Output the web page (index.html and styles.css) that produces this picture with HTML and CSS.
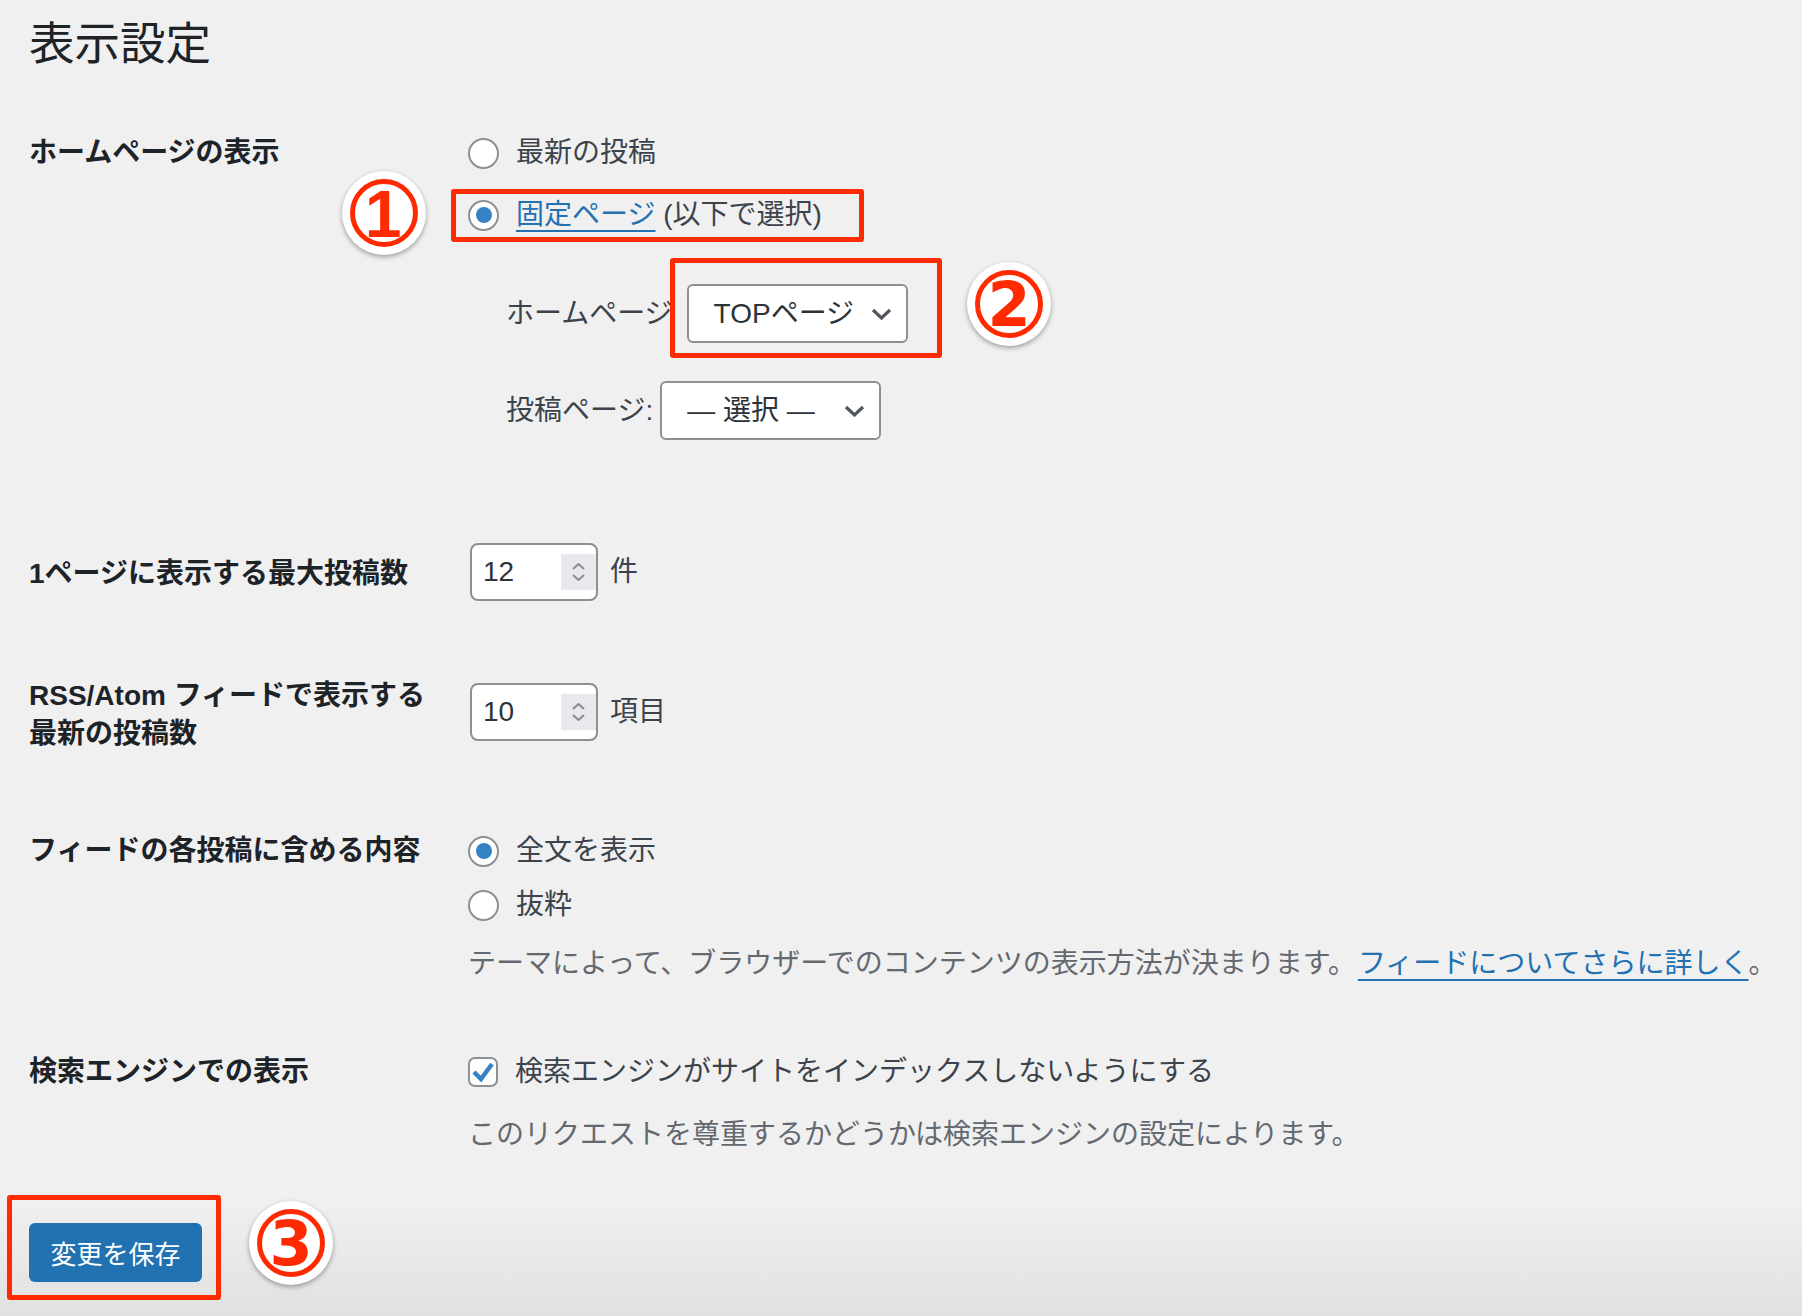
FILE: index.html
```html
<!DOCTYPE html>
<html lang="ja">
<head>
<meta charset="utf-8">
<title>表示設定</title>
<link rel="stylesheet" href="styles.css">
</head>
<body>
<div class="page">
  <h1 class="title">表示設定</h1>
  <form class="form">
    <div class="row row-front">
      <div class="th">ホームページの表示</div>
      <div class="td">
        <div class="choices">
          <label class="choice"><span class="radio"></span>最新の投稿</label>
          <label class="choice"><span class="radio checked"></span><span><a class="link">固定ページ</a> (以下で選択)</span></label>
        </div>
        <div class="subfields">
          <div class="subfield subfield-front">
            <span class="sub-label">ホームページ</span>
            <span class="select"><span>TOPページ</span><svg class="chev" width="21" height="12" viewBox="0 0 21 12"><polyline points="2,2 10.5,10 19,2"/></svg></span>
          </div>
          <div class="subfield">
            <span class="sub-label">投稿ページ:</span>
            <span class="select"><span>— 選択 —</span><svg class="chev" width="21" height="12" viewBox="0 0 21 12"><polyline points="2,2 10.5,10 19,2"/></svg></span>
          </div>
        </div>
      </div>
    </div>

    <div class="row row-posts">
      <div class="th">1ページに表示する最大投稿数</div>
      <div class="td">
        <div class="number-field">
          <span class="number"><span>12</span><span class="spinner"><svg width="13" height="7" viewBox="0 0 13 7"><polyline points="1,6 6.5,1 12,6"/></svg><svg width="13" height="7" viewBox="0 0 13 7"><polyline points="1,1 6.5,6 12,1"/></svg></span></span>
          <span>件</span>
        </div>
      </div>
    </div>

    <div class="row row-feed">
      <div class="th">RSS/Atom フィードで表示する<br>最新の投稿数</div>
      <div class="td">
        <div class="number-field">
          <span class="number"><span>10</span><span class="spinner"><svg width="13" height="7" viewBox="0 0 13 7"><polyline points="1,6 6.5,1 12,6"/></svg><svg width="13" height="7" viewBox="0 0 13 7"><polyline points="1,1 6.5,6 12,1"/></svg></span></span>
          <span>項目</span>
        </div>
      </div>
    </div>

    <div class="row row-content">
      <div class="th">フィードの各投稿に含める内容</div>
      <div class="td">
        <div class="choices choices-tight">
          <label class="choice"><span class="radio checked"></span>全文を表示</label>
          <label class="choice"><span class="radio"></span>抜粋</label>
        </div>
        <p class="description desc-feed">テーマによって、ブラウザーでのコンテンツの表示方法が決まります。<a class="link">フィードについてさらに詳しく</a>。</p>
      </div>
    </div>

    <div class="row row-search">
      <div class="th">検索エンジンでの表示</div>
      <div class="td">
        <label class="choice check-row"><span class="checkbox"><svg width="26" height="26" viewBox="0 0 26 26"><path d="M4 13 L11 20 L22 5"/></svg></span>検索エンジンがサイトをインデックスしないようにする</label>
        <p class="description desc-search">このリクエストを尊重するかどうかは検索エンジンの設定によります。</p>
      </div>
    </div>

    <div class="submit">
      <button type="button" class="button">変更を保存</button>
    </div>
  </form>

  <div class="marker marker-1"></div>
  <div class="marker marker-2"></div>
  <div class="marker marker-3"></div>

  <div class="badge badge-1"><svg width="84" height="84" viewBox="0 0 84 84"><circle cx="42" cy="42" r="31.5"/><text x="41" y="66" class="digit-one">1</text></svg></div>
  <div class="badge badge-2"><svg width="84" height="84" viewBox="0 0 84 84"><circle cx="42" cy="42" r="31.5"/><text x="42" y="64">2</text></svg></div>
  <div class="badge badge-3"><svg width="84" height="84" viewBox="0 0 84 84"><circle cx="42" cy="42" r="31.5"/><text x="42" y="64">3</text></svg></div>
</div>
</body>
</html>
```

FILE: styles.css
```css
* { box-sizing: border-box; }

html {
  background: #f0f0f1 linear-gradient(to bottom, #f0f0f1 0, #f0f0f1 1200px, #e1e1e2 1316px) no-repeat;
  background-size: 100% 1316px;
}

body {
  margin: 0;
  font-family: "Liberation Sans", "Noto Sans CJK JP", sans-serif;
  font-size: 28px;
  line-height: 38px;
  color: #3c434a;
}

.page {
  position: relative;
  width: 1802px;
  height: 1316px;
  padding: 17px 0 0 29px;
}

.title {
  margin: 0;
  font-size: 45.5px;
  line-height: 56px;
  font-weight: 400;
  color: #1d2327;
}

.row {
  display: flex;
  align-items: flex-start;
}

.th {
  width: 400px;
  margin-right: 39px;
  flex-shrink: 0;
  font-weight: 700;
  color: #1d2327;
  white-space: nowrap;
}

.td { flex: 1; }

.row-front { margin-top: 61px; }
.row-posts { margin-top: 103px; }
.row-posts .th { padding-top: 12px; }
.row-feed { margin-top: 76px; }
.row-feed .td { padding-top: 6px; }
.row-content { margin-top: 79px; }
.row-search { margin-top: 70px; }
.submit { margin-top: 69px; }

.choices {
  display: flex;
  flex-direction: column;
  gap: 24px;
}
.choices-tight { gap: 16px; }

.choice {
  display: flex;
  align-items: center;
  height: 38px;
  gap: 17px;
}

.radio {
  width: 31px;
  height: 31px;
  border: 2px solid #8c8f94;
  border-radius: 50%;
  background: #fff;
  display: flex;
  align-items: center;
  justify-content: center;
  flex-shrink: 0;
}
.radio.checked::before {
  content: "";
  width: 16px;
  height: 16px;
  border-radius: 50%;
  background: #3582c4;
}

.link {
  color: #2271b1;
  text-decoration: underline;
  text-decoration-thickness: 2px;
  text-underline-offset: 6px;
}

.desc-feed .link { margin-left: 2px; }

.subfields {
  margin-top: 50px;
  padding-left: 38px;
  display: flex;
  flex-direction: column;
  gap: 38px;
}

.subfield {
  display: flex;
  align-items: center;
  gap: 7px;
  height: 59px;
}
.subfield-front { gap: 14px; }

.select {
  width: 221px;
  height: 59px;
  border: 2px solid #8c8f94;
  border-radius: 6px;
  background: #fff;
  display: flex;
  align-items: center;
  justify-content: space-between;
  padding: 0 14px 0 25px;
  color: #2c3338;
}

.chev polyline {
  fill: none;
  stroke: #50575e;
  stroke-width: 3.2;
}

.number-field {
  display: flex;
  align-items: center;
  gap: 12px;
  padding-left: 2px;
}

.number {
  width: 128px;
  height: 58px;
  border: 2px solid #8c8f94;
  border-radius: 8px;
  background: #fff;
  display: flex;
  align-items: center;
  padding-left: 11px;
  color: #2c3338;
}

.spinner {
  margin-left: auto;
  width: 35px;
  height: 36px;
  background: #e9e9ed;
  display: flex;
  flex-direction: column;
  align-items: center;
  justify-content: center;
  gap: 4px;
}
.spinner svg { display: block; }
.spinner polyline {
  fill: none;
  stroke: #8a8a90;
  stroke-width: 2;
}

.description {
  margin: 0;
  color: #646970;
}
.desc-feed { margin-top: 21px; }
.desc-search { margin-top: 25px; }

.checkbox {
  width: 30px;
  height: 30px;
  border: 2px solid #8c8f94;
  border-radius: 7px;
  background: #fff;
  flex-shrink: 0;
}
.checkbox svg { display: block; }
.checkbox path {
  fill: none;
  stroke: #3582c4;
  stroke-width: 4.5;
}

.button {
  display: flex;
  align-items: center;
  justify-content: center;
  width: 173px;
  height: 59px;
  padding: 0;
  border: none;
  border-radius: 6px;
  background: #2271b1;
  color: #fff;
  font-family: inherit;
  font-size: 26px;
}

.marker {
  position: absolute;
  border: 5px solid #ff2a00;
  border-radius: 3px;
}
.marker-1 { left: 451px; top: 189px; width: 413px; height: 53px; }
.marker-2 { left: 670px; top: 258px; width: 272px; height: 100px; }
.marker-3 { left: 7px; top: 1195px; width: 214px; height: 105px; }

.badge {
  position: absolute;
  width: 84px;
  height: 84px;
  border-radius: 50%;
  background: #fff;
  box-shadow: 0 2px 5px rgba(0, 0, 0, 0.35);
}
.badge svg { display: block; }
.badge circle {
  fill: none;
  stroke: #ff2a00;
  stroke-width: 5;
}
.badge text {
  fill: #ff2a00;
  font-family: "DejaVu Sans", sans-serif;
  font-weight: 700;
  font-size: 62px;
  text-anchor: middle;
}
.badge text.digit-one {
  font-family: "Liberation Sans", sans-serif;
  font-size: 66px;
}
.badge-1 { left: 342px; top: 171px; }
.badge-2 { left: 967px; top: 262px; }
.badge-3 { left: 249px; top: 1201px; }
```
